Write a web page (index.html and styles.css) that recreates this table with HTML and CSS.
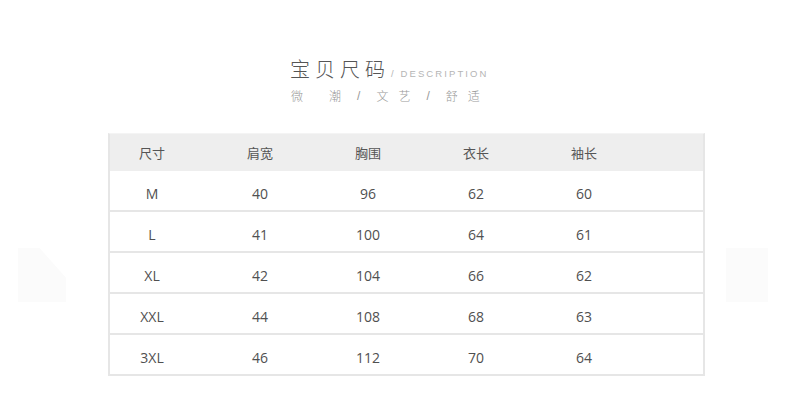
FILE: index.html
```html
<!DOCTYPE html>
<html lang="zh-CN">
<head>
<meta charset="utf-8">
<title>宝贝尺码</title>
<link rel="stylesheet" href="styles.css">
</head>
<body>
<div class="page">
  <div class="deco deco-left"></div>
  <div class="deco deco-right"></div>
  <header class="head">
    <div class="title-row">
      <span class="title">宝贝尺码</span>
      <span class="en">/ DESCRIPTION</span>
    </div>
    <div class="sub">
      <span class="wide">微</span><span>潮</span><span class="sl">/</span><span>文</span><span>艺</span><span class="sl">/</span><span>舒</span><span>适</span>
    </div>
  </header>
  <div class="table">
    <div class="row hd">
      <span class="cell">尺寸</span><span class="cell">肩宽</span><span class="cell">胸围</span><span class="cell">衣长</span><span class="cell">袖长</span>
    </div>
    <div class="row">
      <span class="cell">M</span><span class="cell">40</span><span class="cell">96</span><span class="cell">62</span><span class="cell">60</span>
    </div>
    <div class="row">
      <span class="cell">L</span><span class="cell">41</span><span class="cell">100</span><span class="cell">64</span><span class="cell">61</span>
    </div>
    <div class="row">
      <span class="cell">XL</span><span class="cell">42</span><span class="cell">104</span><span class="cell">66</span><span class="cell">62</span>
    </div>
    <div class="row">
      <span class="cell">XXL</span><span class="cell">44</span><span class="cell">108</span><span class="cell">68</span><span class="cell">63</span>
    </div>
    <div class="row">
      <span class="cell">3XL</span><span class="cell">46</span><span class="cell">112</span><span class="cell">70</span><span class="cell">64</span>
    </div>
  </div>
</div>
</body>
</html>
```
FILE: styles.css
```css
* { box-sizing: border-box; }
html, body {
  margin: 0;
  padding: 0;
  background: #fff;
}
body {
  width: 790px;
  height: 420px;
  overflow: hidden;
  font-family: "Open Sans", "Noto Sans CJK SC", sans-serif;
}
.page {
  position: relative;
  width: 790px;
  height: 420px;
  padding-top: 57px;
}
.deco {
  position: absolute;
  background: #fbfbfb;
}
.deco-left {
  left: 18px;
  top: 248px;
  width: 48px;
  height: 54px;
  clip-path: polygon(0 0, 45% 0, 100% 55%, 100% 100%, 0 100%);
}
.deco-right {
  left: 726px;
  top: 248px;
  width: 42px;
  height: 54px;
}
.head {
  position: relative;
  padding-left: 290px;
}
.title-row {
  display: flex;
  align-items: baseline;
  height: 24px;
}
.title {
  font-family: "Noto Sans CJK SC", sans-serif;
  font-weight: 300;
  font-size: 20px;
  line-height: 24px;
  letter-spacing: 5px;
  color: #555;
}
.en {
  font-family: "Liberation Sans", sans-serif;
  font-size: 9.5px;
  letter-spacing: 2.1px;
  color: #b5b5b5;
  margin-left: 1px;
}
.sub {
  display: flex;
  gap: 10px;
  margin-top: 8px;
  padding-left: 1px;
  font-family: "Noto Sans CJK SC", sans-serif;
  font-weight: 300;
  font-size: 12px;
  line-height: 14px;
  color: #999;
}
.sub .wide { margin-right: 16px; }
.sub .sl { margin: 0 6px; font-family: "Liberation Sans", sans-serif; }
.table {
  position: relative;
  margin-top: 30px;
  margin-left: 108px;
  width: 597px;
  border-left: 2px solid #e6e6e6;
  border-right: 2px solid #e6e6e6;
  border-top: 1px solid #f4f4f4;
}
.row {
  display: flex;
  align-items: center;
  gap: 48px;
  padding-left: 12px;
  padding-top: 5px;
  height: 41px;
  border-bottom: 2px solid #e6e6e6;
  font-size: 14px;
  color: #505050;
}
.row.hd {
  height: 37px;
  padding-top: 0;
  border-bottom: 0;
  background: #eeeeee;
  font-family: "Noto Sans CJK SC", sans-serif;
  font-size: 13px;
  color: #555;
}
.cell {
  width: 60px;
  text-align: center;
  white-space: nowrap;
}
```
